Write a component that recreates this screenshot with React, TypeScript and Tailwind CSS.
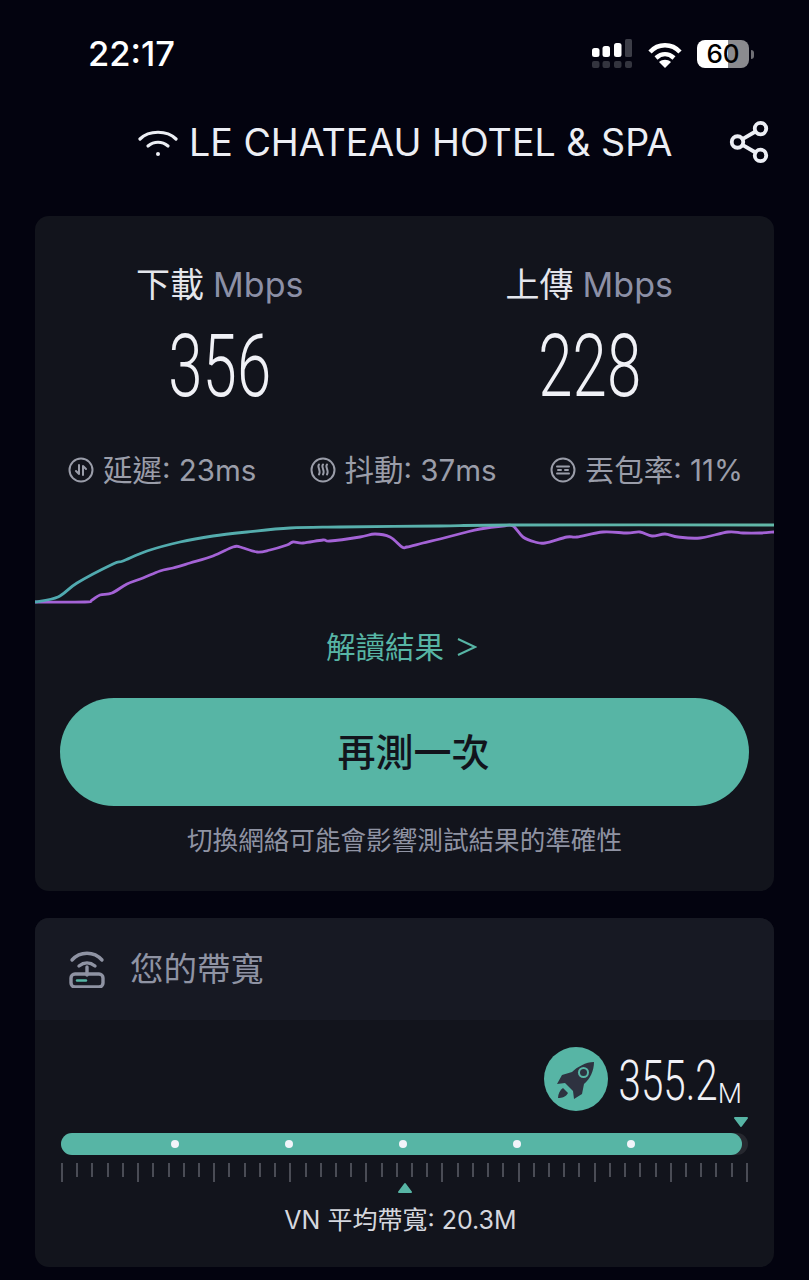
const font = { fontFamily: 'Inter, "Noto Sans CJK TC", sans-serif' };

// chart points, in page pixels read off the screenshot
const tealPoints = [
  [35, 602], [58, 597], [77, 583], [113, 564], [123, 561], [147, 551], [180, 542], [213, 536],
  [247, 532], [290, 528], [340, 527], [440, 526], [510, 525], [774, 525],
];
const purplePoints = [
  [35, 602], [85, 602], [92, 600], [100, 595], [112, 593], [127, 584], [143, 578], [160, 571],
  [173, 568], [190, 563], [213, 556], [233, 547], [240, 547], [257, 552], [270, 550], [287, 545],
  [293, 542], [303, 543], [323, 540], [330, 541], [360, 537], [375, 534], [390, 537], [402, 547],
  [407, 547], [423, 543], [440, 539], [463, 533], [480, 529], [503, 526], [513, 526], [523, 537],
  [535, 542], [545, 543], [567, 537], [577, 537], [603, 532], [627, 533], [640, 532], [652, 536],
  [665, 534], [678, 537], [700, 538], [728, 532], [743, 533], [760, 533], [774, 532],
];

function smoothPath(points: number[][]) {
  const p = points.map(([x, y]) => [x - 35, y - 520]);
  let d = `M${p[0][0]} ${p[0][1]}`;
  for (let i = 0; i < p.length - 1; i++) {
    const a = p[Math.max(i - 1, 0)];
    const b = p[i];
    const c = p[i + 1];
    const e = p[Math.min(i + 2, p.length - 1)];
    const c1x = b[0] + (c[0] - a[0]) / 6;
    const c1y = b[1] + (c[1] - a[1]) / 6;
    const c2x = c[0] - (e[0] - b[0]) / 6;
    const c2y = c[1] - (e[1] - b[1]) / 6;
    d += ` C${c1x} ${c1y} ${c2x} ${c2y} ${c[0]} ${c[1]}`;
  }
  return d;
}

const metrics = [
  { icon: "latency", label: "延遲: 23ms" },
  { icon: "jitter", label: "抖動: 37ms" },
  { icon: "loss", label: "丟包率: 11%" },
];

function MetricIcon({ name }: { name: string }) {
  return (
    <svg width="26" height="26" viewBox="0 0 26 26" fill="none" stroke="#9a9da9" strokeWidth="2" strokeLinecap="round" strokeLinejoin="round">
      <circle cx="13" cy="13" r="11.500" />
      {name === "latency" && (
        <>
          <path d="M11 8v9M11 17l-3-3" />
          <path d="M15 18V9M15 9l3 3" />
        </>
      )}
      {name === "jitter" && (
        <>
          <path d="M9 7.500c-2.500 2.500 2.500 5.500 0 10" />
          <path d="M13 7.500c-2.500 2.500 2.500 5.500 0 10" />
          <path d="M17 7.500c-2.500 2.500 2.500 5.500 0 10" />
        </>
      )}
      {name === "loss" && (
        <>
          <path d="M7 9.500h12" />
          <path d="M7 16.500h12" />
          <path d="M8 13h3M15 13h3" />
        </>
      )}
    </svg>
  );
}

function StatusIcons() {
  return (
    <div className="flex items-center">
      <svg width="41" height="30" viewBox="0 0 41 30" fill="white">
        <rect x="0" y="9" width="7.500" height="9" rx="2.500" />
        <rect x="10.500" y="7" width="7.500" height="11" rx="2.500" />
        <rect x="22" y="4" width="7.500" height="14" rx="2.500" />
        <rect x="33" y="0" width="7" height="18" rx="1.500" fill="#3c3d47" />
        <g fill="#33343e">
          <rect x="0" y="22" width="7.500" height="7" rx="2" />
          <rect x="10.500" y="22" width="7.500" height="7" rx="2" />
          <rect x="22" y="22" width="7.500" height="7" rx="2" />
          <rect x="33" y="22" width="7" height="7" rx="2" />
        </g>
      </svg>
      <svg className="ml-[15px]" width="34" height="27" viewBox="0 0 34 27" fill="none" stroke="white" strokeWidth="4.400">
        <path d="M2 11C10 2 24 2 32 11" />
        <path d="M8 17c5.500-5 12.500-5 18 0" />
        <path d="M17 27l-6-6c3.500-3 8.500-3 12 0z" fill="white" stroke="none" />
      </svg>
      <div className="ml-[15px] flex items-center">
        <div className="flex h-[28px] w-[52px] items-center justify-center rounded-[8px] bg-[linear-gradient(90deg,#fff_60%,#8b8b8f_60%)] text-[26px] leading-none font-medium text-black">
          60
        </div>
        <div className="ml-[2px] h-[9px] w-[3px] rounded-r-sm bg-[#6f6f75]" />
      </div>
    </div>
  );
}

function Rocket() {
  return (
    <div className="h-[64px] w-[64px] shrink-0 rounded-full bg-[#57b5a5]">
      <svg width="64" height="64" viewBox="0 0 64 64">
        <path
          d="M50 15C50 24 46 32 40 37L38 47L30 52L29 44L21 36L13 37L18 28L28 25C33 20 42 15 50 15Z"
          fill="#2e3240"
        />
        <circle cx="39.500" cy="25.500" r="5.500" fill="#57b5a5" />
        <circle cx="39.500" cy="25.500" r="3.500" fill="#2e3240" />
        <path d="M19 41L24 46C22 50 18 51 14 51C14 47 16 43 19 41Z" fill="#2e3240" />
      </svg>
    </div>
  );
}

function Triangle({ up }: { up?: boolean }) {
  return (
    <svg width="14" height="12" viewBox="0 0 14 12" fill="#57b5a5" stroke="#57b5a5" strokeWidth="2" strokeLinejoin="round">
      {up ? <path d="M7 2L13 10H1Z" /> : <path d="M1 2H13L7 10Z" />}
    </svg>
  );
}

export default function App() {
  return (
    <div className="h-[1280px] overflow-hidden bg-[#03030f] px-[35px] text-white" style={font}>
      {/* status bar */}
      <div className="flex h-[108px] items-center justify-between pr-[20px] pl-[53px]">
        <span className="text-[34.500px] font-medium">22:17</span>
        <StatusIcons />
      </div>

      {/* wifi name */}
      <div className="flex h-[70px] items-center pl-[103px]">
        <svg width="40" height="30" viewBox="0 0 40 30" fill="none" stroke="#eceef4" strokeWidth="3.200" strokeLinecap="round">
          <path d="M2 11C11 2 29 2 38 11" />
          <path d="M10 18c6-5 14-5 20 0" />
          <circle cx="20" cy="26" r="2" fill="#eceef4" stroke="none" />
        </svg>
        <span className="ml-[11px] text-[37.600px] whitespace-nowrap text-[#eceef4]">LE CHATEAU HOTEL &amp; SPA</span>
        <svg className="mt-[-3px] mr-[2px] ml-auto" width="46" height="46" viewBox="0 0 24 24" fill="none" stroke="#eceef4" strokeWidth="2" strokeLinecap="round" strokeLinejoin="round">
          <circle cx="18" cy="5" r="3" />
          <circle cx="6" cy="12" r="3" />
          <circle cx="18" cy="19" r="3" />
          <path d="M8.590 13.510l6.830 3.980M15.410 6.510l-6.820 3.980" />
        </svg>
      </div>

      {/* result card */}
      <div className="mt-[38px] h-[675px] overflow-hidden rounded-[14px] bg-[#12141c] pt-[49px]">
        <div className="grid grid-cols-2 text-center">
          {[
            { label: "下載", value: "356" },
            { label: "上傳", value: "228" },
          ].map((s) => (
            <div key={s.label}>
              <div className="h-[40px] text-[34px] leading-[40px]">
                <span className="text-[#e4e6ec]">{s.label}</span>
                <span className="ml-[9px] text-[#8c90a6]">Mbps</span>
              </div>
              <div
                className="mt-[21px] h-[80px] scale-x-[0.71] text-[87px] leading-[80px] font-light text-[#f0f1f6]"
                style={{ fontFamily: "Roboto, sans-serif" }}
              >
                {s.value}
              </div>
            </div>
          ))}
        </div>

        <div className="mt-[44px] flex h-[40px] items-center justify-between pr-[31px] pl-[33px] text-[29.500px] text-[#9a9da9]">
          {metrics.map((m) => (
            <div key={m.icon} className="flex items-center gap-[9px]">
              <MetricIcon name={m.icon} />
              <span>{m.label}</span>
            </div>
          ))}
        </div>

        <svg className="mt-[30px] block" width="739" height="90" viewBox="0 0 739 90" fill="none" strokeWidth="2.800" strokeLinejoin="round" strokeLinecap="round">
          <defs>
            <linearGradient id="tealLine" x1="0" y1="0" x2="739" y2="0" gradientUnits="userSpaceOnUse">
              <stop offset="0" stopColor="#4fa9b0" />
              <stop offset="1" stopColor="#62b8a8" />
            </linearGradient>
          </defs>
          <path d={smoothPath(purplePoints)} stroke="#a463d6" />
          <path d={smoothPath(tealPoints)} stroke="url(#tealLine)" />
        </svg>

        <div className="mt-[17px] flex h-[40px] items-center justify-center gap-[13px] pr-[6px] text-[29.500px] text-[#57b5a5]">
          <span>解讀結果</span>
          <svg width="20" height="22" viewBox="0 0 20 22" fill="none" stroke="#57b5a5" strokeWidth="2">
            <path d="M1 3l17 8L1 19" />
          </svg>
        </div>

        <div className="mx-[25px] mt-[31px] flex h-[108px] items-center justify-center rounded-full bg-[#57b5a5] pl-[18px] text-[38px] font-medium text-[#12141c]">
          再測一次
        </div>

        <div className="mt-[17px] h-[36px] text-center text-[25.600px] leading-[36px] text-[#8f93a3]">
          切換網絡可能會影響測試結果的準確性
        </div>
      </div>

      {/* bandwidth card */}
      <div className="mt-[27px] h-[349px] overflow-hidden rounded-[14px] bg-[#12141c]">
        <div className="flex h-[102px] items-center bg-[#171923] pl-[34px]">
          <svg width="36" height="38" viewBox="0 0 36 38" fill="none" stroke="#8f93a3" strokeWidth="3.400" strokeLinecap="round">
            <path d="M3 10C11 1 25 1 33 10" />
            <path d="M10 16c5-4 11-4 16 0" />
            <path d="M18 17v8" />
            <rect x="2" y="24" width="32" height="13" rx="4" />
            <path d="M8 30.500h9" stroke="#57b5a5" strokeWidth="2.400" />
          </svg>
          <span className="ml-[25px] text-[33.500px] text-[#8f93a3]">您的帶寬</span>
        </div>

        <div className="px-[26px] pt-[27px]">
          <div className="flex h-[64px] items-center justify-end pr-[6px]">
            <Rocket />
            <div className="mt-[4px] ml-[12px] flex w-[98px] justify-end">
              <span
                className="shrink-0 origin-right scale-x-[0.72] text-[56px] leading-none font-light text-[#f0f1f6]"
                style={{ fontFamily: "Roboto, sans-serif" }}
              >
                355.2
              </span>
            </div>
            <span className="self-end pb-[3px] text-[28px] leading-none font-light text-[#f0f1f6]" style={{ fontFamily: "Roboto, sans-serif" }}>
              M
            </span>
          </div>

          <div className="mt-[5px] flex justify-end">
            <Triangle />
          </div>

          <div className="mt-[5px] h-[22px] rounded-full bg-[#26282f]">
            <div className="flex h-full w-[681px] items-center gap-[106px] rounded-full bg-[#57b5a5] pl-[110px]">
              {[0, 1, 2, 3, 4].map((d) => (
                <span key={d} className="h-[8px] w-[8px] shrink-0 rounded-full bg-[#f2f4fa]" />
              ))}
            </div>
          </div>

          <div className="mt-[8px] flex h-[19px] items-start justify-between">
            {Array.from({ length: 46 }).map((_, i) => (
              <span key={i} className={i % 5 === 0 ? "h-[19px] w-[2px] bg-[#4a4c55]" : "h-[14px] w-[2px] bg-[#4a4c55]"} />
            ))}
          </div>

          <div className="ml-[337px] flex">
            <Triangle up />
          </div>

          <div className="mt-[8px] h-[36px] pr-[8px] text-center text-[25px] leading-[36px] text-[#d5d7de]">VN 平均帶寬: 20.3M</div>
        </div>
      </div>
    </div>
  );
}
